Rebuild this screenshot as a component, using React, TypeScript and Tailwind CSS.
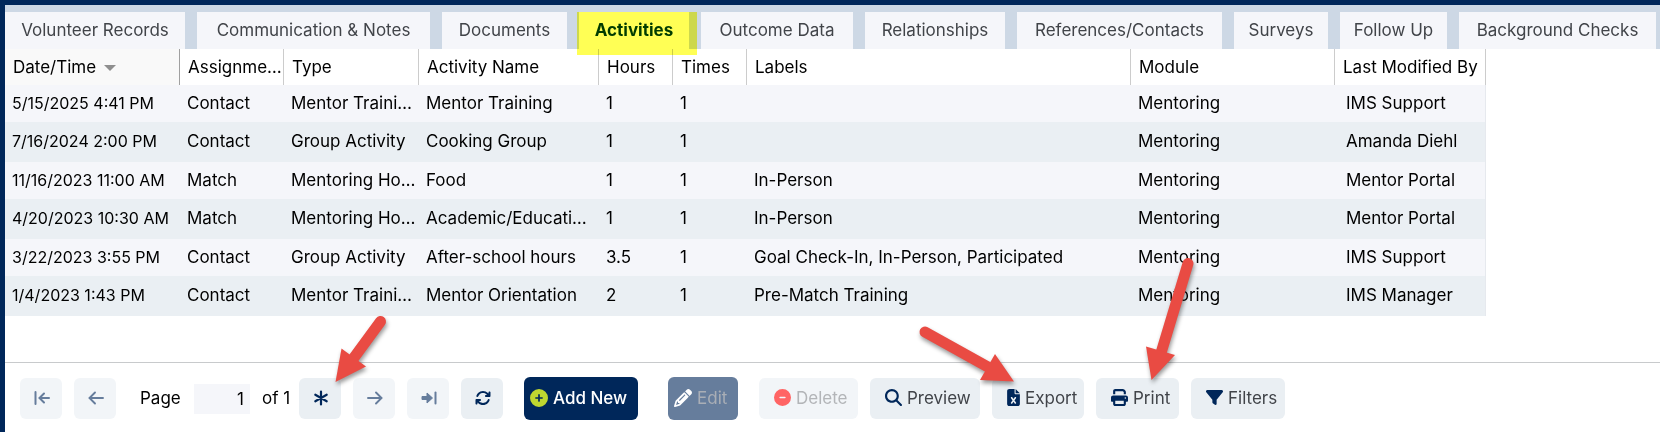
import { useState } from "react";
import type { ReactNode } from "react";
import {
  FaArrowsRotate,
  FaCircleMinus,
  FaCirclePlus,
  FaFileExcel,
  FaFilter,
  FaMagnifyingGlass,
  FaPencil,
  FaPrint,
} from "react-icons/fa6";

const TABS = [
  { name: "Volunteer Records", width: "w-[180px]" },
  { name: "Communication & Notes", width: "w-[233px]" },
  { name: "Documents", width: "w-[125px]" },
  { name: "Activities", width: "w-[110px]" },
  { name: "Outcome Data", width: "w-[152px]" },
  { name: "Relationships", width: "w-[140px]" },
  { name: "References/Contacts", width: "w-[205px]" },
  { name: "Surveys", width: "w-[94px]" },
  { name: "Follow Up", width: "w-[107px]" },
  { name: "Background Checks", width: "w-[197px]" },
];

const COLUMNS = [
  { name: "Date/Time", width: "w-[175px]" },
  { name: "Assignme…", width: "w-[104px]" },
  { name: "Type", width: "w-[135px]" },
  { name: "Activity Name", width: "w-[180px]" },
  { name: "Hours", width: "w-[74px]" },
  { name: "Times", width: "w-[74px]" },
  { name: "Labels", width: "w-96" },
  { name: "Module", width: "w-51" },
  { name: "Last Modified By", width: "w-[151px]" },
];

const ROWS = [
  ["5/15/2025 4:41 PM", "Contact", "Mentor Traini…", "Mentor Training", "1", "1", "", "Mentoring", "IMS Support"],
  ["7/16/2024 2:00 PM", "Contact", "Group Activity", "Cooking Group", "1", "1", "", "Mentoring", "Amanda Diehl"],
  ["11/16/2023 11:00 AM", "Match", "Mentoring Ho…", "Food", "1", "1", "In-Person", "Mentoring", "Mentor Portal"],
  ["4/20/2023 10:30 AM", "Match", "Mentoring Ho…", "Academic/Educati…", "1", "1", "In-Person", "Mentoring", "Mentor Portal"],
  ["3/22/2023 3:55 PM", "Contact", "Group Activity", "After-school hours", "3.5", "1", "Goal Check-In, In-Person, Participated", "Mentoring", "IMS Support"],
  ["1/4/2023 1:43 PM", "Contact", "Mentor Traini…", "Mentor Orientation", "2", "1", "Pre-Match Training", "Mentoring", "IMS Manager"],
];

export default function App() {
  const [page, setPage] = useState("1");

  return (
    <div className="relative min-h-screen overflow-hidden border-t-5 border-l-5 border-[#00275a] bg-white font-[Inter,sans-serif] text-[17px] leading-6 text-black">
      <TabStrip />
      <ActivityTable />

      <div className="mt-[46px] flex items-center border-t border-[#c8cacc] pt-3.5 pl-[15px]">
        <div className="flex items-center gap-3">
          <IconButton label="First page" disabled><FirstIcon /></IconButton>
          <IconButton label="Previous page" disabled><PrevIcon /></IconButton>
          <label htmlFor="page" className="ml-3 w-[42px] pb-0.5">Page</label>
          <input
            id="page"
            value={page}
            onChange={(e) => setPage(e.target.value)}
            className="h-[30px] w-14 bg-[#f5f6fa] px-1.5 text-right"
          />
          <span className="w-[25px] pb-0.5 whitespace-nowrap">of 1</span>
          <IconButton label="All records"><AsteriskIcon /></IconButton>
          <IconButton label="Next page" disabled><NextIcon /></IconButton>
          <IconButton label="Last page" disabled><LastIcon /></IconButton>
          <IconButton label="Refresh"><FaArrowsRotate className="size-4" /></IconButton>
        </div>

        <button className="ml-[21px] flex h-[43px] w-[114px] items-center gap-[5px] rounded-md bg-[#00275a] pb-0.5 pl-1.5 font-medium whitespace-nowrap text-white">
          <FaCirclePlus className="size-[18px] shrink-0 text-[#bfd730]" />
          Add New
        </button>
        <button disabled className="ml-[30px] flex h-[43px] w-[70px] items-center gap-[5px] rounded-md bg-[#667d9c] pb-0.5 pl-1.5 text-[#a9aeb6]">
          <FaPencil className="size-[18px] text-white" />
          Edit
        </button>

        <div className="ml-[21px] flex gap-3">
          <ToolButton width="w-[99px]" icon={<FaCircleMinus className="size-[17px] text-[#ff6464]" />} label="Delete" disabled />
          <ToolButton width="w-[110px]" icon={<FaMagnifyingGlass className="size-[17px]" />} label="Preview" />
          <ToolButton width="w-[92px]" icon={<FaFileExcel className="h-[17px] w-[13px]" />} label="Export" />
          <ToolButton width="w-[83px]" icon={<FaPrint className="size-[17px]" />} label="Print" />
          <ToolButton width="w-[94px]" icon={<FaFilter className="size-[17px]" />} label="Filters" />
        </div>
      </div>

      <Callouts />
    </div>
  );
}

function TabStrip() {
  return (
    <nav className="flex gap-3 bg-[#cdd8e5] pt-[7px]">
      {TABS.map((tab) => {
        const active = tab.name === "Activities";
        return (
          <button
            key={tab.name}
            className={`${tab.width} relative h-[37px] shrink-0 pb-0.5 whitespace-nowrap ${
              active ? "bg-white font-bold text-[#003c00]" : "bg-[#f5f6fa] text-[#414449]"
            }`}
          >
            {tab.name}
            {active && (
              <span className="absolute top-0 -left-0.5 z-10 h-[43px] w-[120px] bg-[#ffff55] mix-blend-multiply" />
            )}
          </button>
        );
      })}
    </nav>
  );
}

function ActivityTable() {
  return (
    <table className="w-[1481px] table-fixed border-separate border-spacing-0">
      <thead>
        <tr className="h-9 text-left">
          {COLUMNS.map((col, i) => (
            <th
              key={col.name}
              className={`${col.width} border-r pl-2 font-normal whitespace-nowrap ${
                i === 0 ? "border-[#a0a0a0] bg-[#f9f9f9]" : "border-[#cccccc]"
              }`}
            >
              {col.name}
              {i === 0 && (
                <svg viewBox="0 0 12 6" className="ml-2 inline h-1.5 w-3" fill="#8f8f8f">
                  <path d="M0 0h12L6 6z" />
                </svg>
              )}
            </th>
          ))}
        </tr>
      </thead>
      <tbody>
        {ROWS.map((row) => (
          <tr key={row[0]} className="h-[37px] bg-[#f5f6fa] even:h-10 even:bg-[#eaeff3]">
            {row.map((cell, i) => (
              <td
                key={i}
                className="pb-0.5 pl-[7px] whitespace-nowrap first:text-[16px] last:border-r last:border-[#e6e9ee] last:pl-[11px]"
              >
                {cell}
              </td>
            ))}
          </tr>
        ))}
      </tbody>
    </table>
  );
}

function IconButton({ label, disabled, children }: { label: string; disabled?: boolean; children: ReactNode }) {
  return (
    <button
      aria-label={label}
      disabled={disabled}
      className="flex h-[41px] w-[42px] items-center justify-center rounded-md bg-[#eaeff3] pb-0.5 pl-0.5 text-[#00275a] disabled:bg-[#f2f5f8] disabled:text-[#667d9c]"
    >
      {children}
    </button>
  );
}

function ToolButton({ width, icon, label, disabled }: { width: string; icon: ReactNode; label: string; disabled?: boolean }) {
  return (
    <button
      disabled={disabled}
      className={`${width} flex h-[41px] items-center gap-[5px] rounded-md bg-[#eaeff3] pb-0.5 pl-[15px] text-[#414449] disabled:bg-[#f2f5f8] disabled:text-[#b3b5b8]`}
    >
      <span className="shrink-0 text-[#00275a]">{icon}</span>
      {label}
    </button>
  );
}

function FirstIcon() {
  return (
    <svg viewBox="0 0 16 14" className="h-3.5 w-4" fill="none" stroke="currentColor" strokeWidth="2" strokeLinecap="round">
      <path d="M1.5 1v12M15 7H6M10 2.500L5.500 7l4.500 4.500" />
    </svg>
  );
}

function PrevIcon() {
  return (
    <svg viewBox="0 0 16 14" className="h-3.5 w-4" fill="none" stroke="currentColor" strokeWidth="1.9" strokeLinecap="round">
      <path d="M15 7H2M7 1.500L1.500 7 7 12.500" />
    </svg>
  );
}

function AsteriskIcon() {
  return (
    <svg viewBox="0 0 16 16" className="size-4" fill="none" stroke="currentColor" strokeWidth="2.2" strokeLinecap="round">
      <path d="M8 1.500v13M2.300 4.700l11.400 6.600M13.700 4.700L2.300 11.300" />
    </svg>
  );
}

function NextIcon() {
  return (
    <svg viewBox="0 0 16 14" className="h-3.5 w-4" fill="none" stroke="currentColor" strokeWidth="1.9" strokeLinecap="round">
      <path d="M1 7h13M9 1.500L14.500 7 9 12.500" />
    </svg>
  );
}

function LastIcon() {
  return (
    <svg viewBox="0 0 16 14" className="h-3.5 w-4" fill="currentColor" stroke="currentColor" strokeLinejoin="round">
      <path d="M1 5.500h5V2L11.500 7 6 12V8.500H1z" />
      <path d="M14.500 1.500v11" strokeWidth="2" strokeLinecap="round" />
    </svg>
  );
}

// red arrows pointing at the all-records, export and print buttons
function Callouts() {
  return (
    <svg
      viewBox="0 0 1655 427"
      className="pointer-events-none absolute top-0 left-0 h-[427px] w-[1655px] drop-shadow-[1px_3px_2px_rgba(0,0,0,0.4)]"
      fill="#e94b43"
      stroke="#e94b43"
    >
      <g transform="translate(-5 -5)">
        <path d="M380.500 321.500L353 359" strokeWidth="11" strokeLinecap="round" />
        <path d="M335.500 382L341.500 348.500L366 366.500z" stroke="none" />
        <path d="M925 332L988 367" strokeWidth="11" strokeLinecap="round" />
        <path d="M1014 381.500L995 354L980 380z" stroke="none" />
        <path d="M1188 263.500L1161 353" strokeWidth="11" strokeLinecap="round" />
        <path d="M1151.500 380L1146 346.500L1175 355z" stroke="none" />
      </g>
    </svg>
  );
}
